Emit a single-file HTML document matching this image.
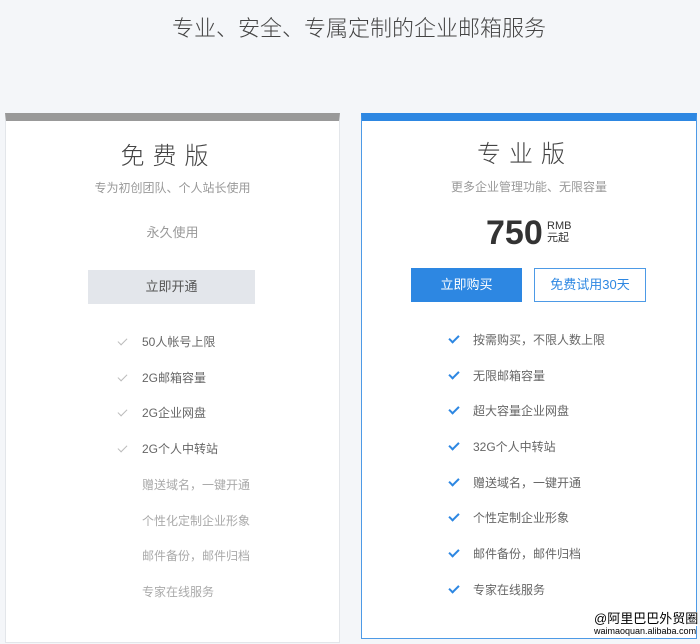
<!DOCTYPE html>
<html><head><meta charset="utf-8"><style>
body{margin:0;width:700px;height:644px;background:#f4f6f9;font-family:"Liberation Sans","Noto Sans CJK SC",sans-serif;position:relative;overflow:hidden}
.a{position:absolute;white-space:nowrap}
.card{position:absolute;background:#fff;box-sizing:border-box}
.c{text-align:center}
.it{position:absolute;font-size:12px;color:#666;line-height:16px}
.ck{position:absolute;width:8px;height:4px;border-left:2px solid;border-bottom:2px solid;transform:rotate(-45deg)}
</style></head><body>
<div class="a c" style="left:0;width:718px;top:14px;font-size:22px;color:#444;line-height:30px;font-weight:300">专业、安全、专属定制的企业邮箱服务</div>

<div class="card" style="left:5px;top:113px;width:335px;height:530px;border:1px solid #e3e6ea;border-top:8px solid #999"></div>
<div class="a c" style="left:1px;width:335px;top:142px;font-size:24px;color:#444;letter-spacing:8px;line-height:30px;font-weight:300">免费版</div>
<div class="a c" style="left:5px;width:335px;top:179px;font-size:12px;color:#999">专为初创团队、个人站长使用</div>
<div class="a c" style="left:5px;width:335px;top:222px;font-size:13px;color:#999">永久使用</div>
<div class="a c" style="left:88px;width:167px;top:270px;height:34px;line-height:34px;background:#e3e6eb;font-size:13px;color:#555">立即开通</div>

<div class="card" style="left:361px;top:113px;width:336px;height:526px;border:1px solid #4d9ae6;border-top:8px solid #2d87e2"></div>
<div class="a c" style="left:357px;width:336px;top:140px;font-size:24px;color:#444;letter-spacing:8px;line-height:30px;font-weight:300">专业版</div>
<div class="a c" style="left:361px;width:336px;top:178px;font-size:12px;color:#999">更多企业管理功能、无限容量</div>
<div class="a" style="left:486px;top:213px;font-size:34px;font-weight:bold;color:#333;line-height:40px">750</div>
<div class="a" style="left:547px;top:220px;font-size:11px;color:#333;line-height:12px">RMB<br>元起</div>
<div class="a c" style="left:411px;width:111px;top:268px;height:34px;line-height:34px;background:#2d87e2;font-size:13px;color:#fff">立即购买</div>
<div class="a c" style="left:534px;width:110px;top:268px;height:32px;line-height:32px;border:1px solid #4d9ae6;font-size:13px;color:#2d87e2;background:#fff">免费试用30天</div>

<div class="ck" style="left:118px;top:338px;color:#bbb;border-width:1px"></div><div class="it" style="left:142px;top:334px">50人帐号上限</div>
<div class="ck" style="left:118px;top:374px;color:#bbb;border-width:1px"></div><div class="it" style="left:142px;top:370px">2G邮箱容量</div>
<div class="ck" style="left:118px;top:409px;color:#bbb;border-width:1px"></div><div class="it" style="left:142px;top:405px">2G企业网盘</div>
<div class="ck" style="left:118px;top:445px;color:#bbb;border-width:1px"></div><div class="it" style="left:142px;top:441px">2G个人中转站</div>
<div class="it" style="left:142px;top:477px;color:#aaa">赠送域名，一键开通</div>
<div class="it" style="left:142px;top:513px;color:#aaa">个性化定制企业形象</div>
<div class="it" style="left:142px;top:548px;color:#aaa">邮件备份，邮件归档</div>
<div class="it" style="left:142px;top:584px;color:#aaa">专家在线服务</div>

<div class="ck" style="left:449px;top:335px;color:#2d87e2"></div><div class="it" style="left:473px;top:332px">按需购买，不限人数上限</div>
<div class="ck" style="left:449px;top:371px;color:#2d87e2"></div><div class="it" style="left:473px;top:368px">无限邮箱容量</div>
<div class="ck" style="left:449px;top:406px;color:#2d87e2"></div><div class="it" style="left:473px;top:403px">超大容量企业网盘</div>
<div class="ck" style="left:449px;top:442px;color:#2d87e2"></div><div class="it" style="left:473px;top:439px">32G个人中转站</div>
<div class="ck" style="left:449px;top:478px;color:#2d87e2"></div><div class="it" style="left:473px;top:475px">赠送域名，一键开通</div>
<div class="ck" style="left:449px;top:513px;color:#2d87e2"></div><div class="it" style="left:473px;top:510px">个性定制企业形象</div>
<div class="ck" style="left:449px;top:549px;color:#2d87e2"></div><div class="it" style="left:473px;top:546px">邮件备份，邮件归档</div>
<div class="ck" style="left:449px;top:585px;color:#2d87e2"></div><div class="it" style="left:473px;top:582px">专家在线服务</div>

<div class="a" style="left:594px;top:612px;font-size:13px;color:#000;line-height:14px;background:#fff">@阿里巴巴外贸圈</div>
<div class="a" style="left:594px;top:626px;font-size:9px;color:#000;line-height:11px;background:#fff">waimaoquan.alibaba.com</div>
</body></html>
